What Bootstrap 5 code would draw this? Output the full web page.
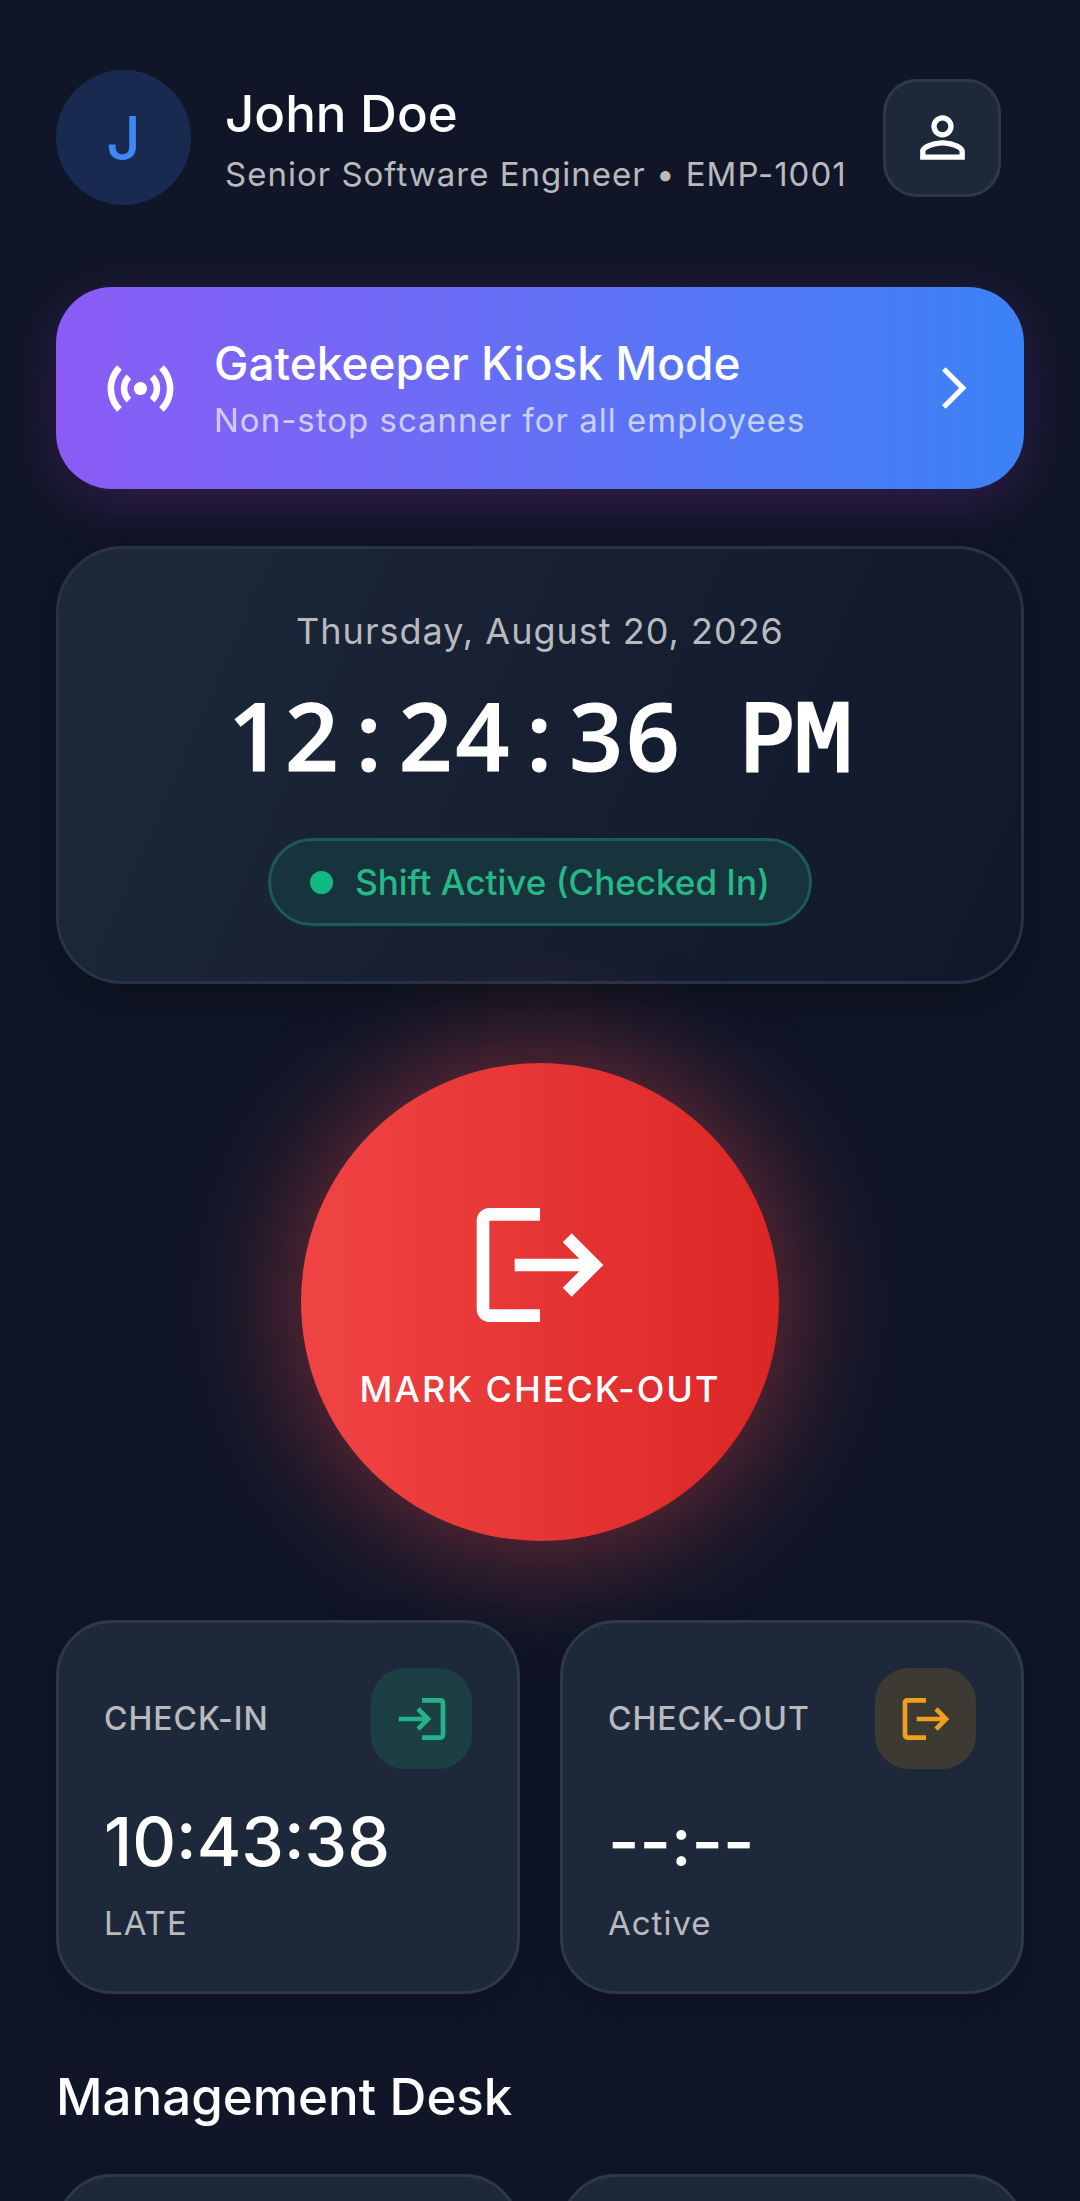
<!DOCTYPE html>
<html lang="en">
<head>
<meta charset="utf-8">
<meta name="viewport" content="width=device-width, initial-scale=1">
<title>Attendance</title>
<link href="https://cdn.jsdelivr.net/npm/bootstrap@5.3.0/dist/css/bootstrap.min.css" rel="stylesheet">
<style>
  :root { --page: #101628; --panel: #1d293a; --line: #2d3848; --soft: #b9babd; }
  body { background: var(--page); color: #fff; font-family: Inter, "Noto Sans", sans-serif; }
  .screen { height: 100vh; overflow: hidden; padding: 70px 56px 0; }
  svg { fill: currentColor; display: block; flex: none; }
  .profile { padding-right: 23px; }
  .avatar { width: 135px; height: 135px; background: #182a50; color: #4285f4; font-size: 60px; font-weight: 500; margin-right: 34px; }
  .title-lg { font-size: 51px; line-height: 62px; font-weight: 500; margin: 0; }
  .title-md { font-size: 46px; line-height: 56px; font-weight: 500; }
  .note { font-size: 33px; line-height: 44px; letter-spacing: 1px; color: var(--soft); }
  .title-lg + .note, .title-md + .note { margin-top: 7px; }
  .person { padding-top: 3px; }
  .icon-btn { width: 118px; height: 118px; border: 3px solid var(--line); border-radius: 34px; background: var(--panel); color: #fff; padding: 0; }
  .kiosk { margin-top: 82px; height: 202px; padding: 0 45px; border: 0; border-radius: 56px; color: #fff;
    background: linear-gradient(90deg, #8b5cf6, #6470f5 50%, #3b82f6); box-shadow: 0 12px 52px rgba(139, 40, 170, .28); }
  .kiosk .note { color: #fff; opacity: .66; }
  .kiosk .texts { margin-left: 34px; }
  .clock-card { margin-top: 57px; height: 438px; border: 3px solid #283243; border-radius: 67px; padding-top: 60px;
    background: linear-gradient(114deg, #1d293a, #10172b); box-shadow: 0 16px 45px rgba(0, 0, 0, .3); }
  .date { font-size: 36px; line-height: 44px; letter-spacing: 1px; color: var(--soft); }
  .clock { font-family: "Open Sans", "Noto Sans", sans-serif; font-weight: 600; font-size: 94px; line-height: 112px; letter-spacing: 3px; margin-top: 26px; -webkit-text-stroke: 1px #fff; }
  .clock-sep { display: inline-block; width: 57px; text-align: center; }
  .clock-half { font-family: "DejaVu Sans Mono", monospace; font-weight: 400; font-size: 92px; line-height: 1; letter-spacing: 1px; margin-left: 29px; -webkit-text-stroke: 3px #fff; }
  .pill { margin-top: 47px; height: 88px; border: 3px solid #1d5a55; border-radius: 44px; background: #17343c; color: #27b888;
    font-size: 35px; font-weight: 500; padding: 0 39px; gap: 22px; }
  .dot { width: 23px; height: 23px; background: #10b981; }
  .punch { width: 478px; height: 478px; border: 0; color: #fff; margin: 79px 0; padding: 0 0 4px; gap: 26px;
    background: linear-gradient(90deg, #f04444, #dc2626); box-shadow: 0 0 110px 14px rgba(239, 68, 68, .42);
    font-size: 36px; line-height: 44px; font-weight: 500; letter-spacing: 2px; }
  .tiles { --bs-gutter-x: 40px; }
  .tile { min-height: 374px; border: 3px solid var(--line); border-radius: 56px; background: var(--panel); padding: 45px; box-shadow: 0 12px 34px rgba(0, 0, 0, .22); }
  .tile-label { font-size: 32px; line-height: 40px; font-weight: 500; letter-spacing: 1px; color: var(--soft); }
  .tile-icon { width: 101px; height: 101px; border-radius: 34px; }
  .tile-icon.in { background: #1c3f44; color: #22b488; }
  .tile-icon.out { background: #3d3a34; color: #f0a01e; }
  .tile-time { font-size: 68px; line-height: 84px; font-weight: 500; margin: 30px 0 18px; }
  .section-title { margin: 72px 0 46px; }
</style>
<script src="https://cdn.jsdelivr.net/npm/bootstrap@5.3.0/dist/js/bootstrap.bundle.min.js"></script>
</head>
<body>
<main class="screen d-flex flex-column">
  <header class="profile d-flex align-items-center">
    <div class="avatar rounded-circle d-flex align-items-center justify-content-center">J</div>
    <div class="person flex-grow-1">
      <h1 class="title-lg">John Doe</h1>
      <div class="note text-nowrap">Senior Software Engineer • EMP-1001</div>
    </div>
    <button type="button" class="icon-btn d-flex align-items-center justify-content-center" aria-label="Profile">
      <svg width="67" height="67" viewBox="0 0 24 24"><path d="M12 5.9a2.1 2.1 0 1 1 0 4.2 2.1 2.1 0 0 1 0-4.2m0 9c2.97 0 6.1 1.46 6.1 2.1v1.1H5.9V17c0-.64 3.13-2.1 6.1-2.1M12 4C9.79 4 8 5.79 8 8s1.79 4 4 4 4-1.79 4-4-1.79-4-4-4zm0 9c-2.67 0-8 1.34-8 4v3h16v-3c0-2.66-5.33-4-8-4z"/></svg>
    </button>
  </header>

  <button type="button" class="kiosk d-flex align-items-center text-start flex-shrink-0">
    <svg width="79" height="79" viewBox="0 0 24 24"><path d="M7.76 16.24C6.67 15.16 6 13.66 6 12s.67-3.16 1.76-4.24l1.42 1.42C8.45 9.9 8 10.9 8 12c0 1.1.45 2.1 1.17 2.83l-1.41 1.41zm8.48 0C17.33 15.16 18 13.66 18 12s-.67-3.16-1.76-4.24l-1.42 1.42C15.55 9.9 16 10.9 16 12c0 1.1-.45 2.1-1.17 2.83l1.41 1.41zM12 10c-1.1 0-2 .9-2 2s.9 2 2 2 2-.9 2-2-.9-2-2-2zm8 2c0 2.21-.9 4.21-2.35 5.65l1.42 1.42C20.88 17.26 22 14.76 22 12s-1.12-5.26-2.93-7.07l-1.42 1.42C19.1 7.79 20 9.79 20 12zM6.35 6.35 4.93 4.93C3.12 6.74 2 9.24 2 12s1.12 5.26 2.93 7.07l1.42-1.42C4.9 16.21 4 14.21 4 12s.9-4.21 2.35-5.65z"/></svg>
    <span class="texts d-flex flex-column flex-grow-1">
      <span class="title-md">Gatekeeper Kiosk Mode</span>
      <span class="note">Non-stop scanner for all employees</span>
    </span>
    <svg width="50" height="50" viewBox="0 0 24 24"><path d="M6.23 20.23 8 22l10-10L8 2 6.23 3.77 14.46 12z"/></svg>
  </button>

  <section class="clock-card d-flex flex-column align-items-center flex-shrink-0">
    <div class="date">Thursday, August 20, 2026</div>
    <div class="clock text-nowrap">12<span class="clock-sep">:</span>24<span class="clock-sep">:</span>36 <span class="clock-half">PM</span></div>
    <div class="pill d-flex align-items-center"><span class="dot rounded-circle"></span>Shift Active (Checked In)</div>
  </section>

  <button type="button" class="punch rounded-circle d-flex flex-column align-items-center justify-content-center align-self-center flex-shrink-0">
    <svg width="152" height="152" viewBox="0 0 24 24"><path d="M17 7l-1.4 1.4 2.6 2.6H8v2h10.2l-2.6 2.6L17 17l5-5zM4 5h8V3H4c-1.1 0-2 .9-2 2v14c0 1.1.9 2 2 2h8v-2H4z"/></svg>
    <span>MARK CHECK-OUT</span>
  </button>

  <div class="row tiles flex-shrink-0">
    <div class="col-6">
      <div class="tile">
        <div class="d-flex align-items-center justify-content-between">
          <span class="tile-label">CHECK-IN</span>
          <span class="tile-icon in d-flex align-items-center justify-content-center">
            <svg width="56" height="56" viewBox="0 0 24 24"><path d="M11 7 9.6 8.4l2.6 2.6H2v2h10.2l-2.6 2.6L11 17l5-5zM20 19h-8v2h8c1.1 0 2-.9 2-2V5c0-1.1-.9-2-2-2h-8v2h8z"/></svg>
          </span>
        </div>
        <div class="tile-time">10:43:38</div>
        <div class="note">LATE</div>
      </div>
    </div>
    <div class="col-6">
      <div class="tile">
        <div class="d-flex align-items-center justify-content-between">
          <span class="tile-label">CHECK-OUT</span>
          <span class="tile-icon out d-flex align-items-center justify-content-center">
            <svg width="56" height="56" viewBox="0 0 24 24"><path d="M17 7l-1.4 1.4 2.6 2.6H8v2h10.2l-2.6 2.6L17 17l5-5zM4 5h8V3H4c-1.1 0-2 .9-2 2v14c0 1.1.9 2 2 2h8v-2H4z"/></svg>
          </span>
        </div>
        <div class="tile-time">--:--</div>
        <div class="note">Active</div>
      </div>
    </div>
  </div>

  <h2 class="title-lg section-title">Management Desk</h2>
  <div class="row tiles flex-shrink-0">
    <div class="col-6"><div class="tile"></div></div>
    <div class="col-6"><div class="tile"></div></div>
  </div>
</main>
</body>
</html>
